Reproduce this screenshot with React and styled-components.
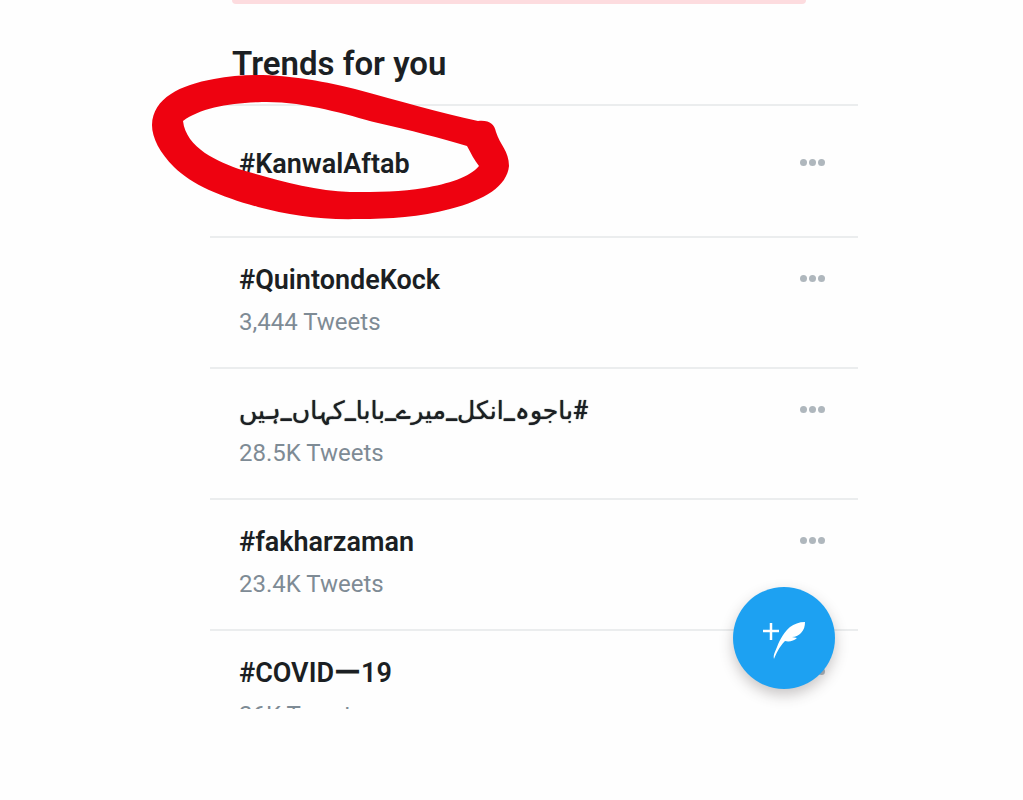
import React from "react";
import styled, { createGlobalStyle, css } from "styled-components";

const GlobalStyle = createGlobalStyle`
  * { box-sizing: border-box; }
  body {
    margin: 0;
    background: #fefefe;
    color: #1b1f23;
    font-family: Roboto, "DejaVu Sans", sans-serif;
  }
`;

const Page = styled.main`
  position: relative;
  padding: 0 165px 0 210px;
`;

const Panel = styled.section`
  position: relative;
  height: 709px;
  overflow: hidden;
`;

const Banner = styled.div`
  height: 4px;
  margin: 0 52px 0 22px;
  border-radius: 0 0 8px 8px;
  background: #fddcdf;
`;

const Heading = styled.h1`
  margin: 0;
  padding: 40px 0 20px 22px;
  font-size: 33px;
  line-height: 40px;
  font-weight: 600;
`;

const List = styled.ul`
  margin: 0;
  padding: 0;
  list-style: none;
`;

const Row = styled.li`
  display: flex;
  justify-content: space-between;
  align-items: flex-start;
  height: ${(p) => (p.$single ? "132px" : "131px")};
  padding: ${(p) => (p.$single ? "42px" : "26px")} 33px 0 29px;
  border-top: 2px solid #ebedee;
`;

const Name = styled.a`
  display: block;
  width: fit-content;
  color: inherit;
  text-decoration: none;
  font-size: 27px;
  line-height: 32px;
  font-weight: 600;
  white-space: nowrap;
  ${(p) =>
    p.$urdu &&
    css`
      font-weight: 500;
      font-size: 25px;
      text-shadow: 0 0 1px currentColor;
    `}
`;

const Count = styled.p`
  margin: 10px 0 0;
  color: #7e8b95;
  font-size: 24px;
  line-height: 32px;
`;

const MoreButton = styled.button`
  display: flex;
  gap: 2px;
  padding: 11px 0;
  border: 0;
  background: none;
  cursor: pointer;
`;

const Dot = styled.span`
  width: 7px;
  height: 7px;
  border-radius: 50%;
  background: #afb7bd;
`;

const ComposeButton = styled.button`
  position: absolute;
  right: 188px;
  bottom: 20px;
  width: 102px;
  height: 102px;
  padding: 0;
  border: 0;
  border-radius: 50%;
  background: #1da1f2;
  box-shadow: 0 6px 14px rgba(60, 50, 50, 0.28);
  cursor: pointer;
  svg { display: block; }
`;

const Scribble = styled.svg`
  position: absolute;
  left: 150px;
  top: 70px;
  pointer-events: none;
`;

const trends = [
  { name: "#KanwalAftab" },
  { name: "#QuintondeKock", count: "3,444 Tweets" },
  { name: "#باجوہ_انکل_میرے_بابا_کہاں_ہیں", count: "28.5K Tweets", urdu: true },
  { name: "#fakharzaman", count: "23.4K Tweets" },
  { name: "#COVIDー19", count: "26K Tweets" },
];

function Trend({ name, count, urdu }) {
  return (
    <Row $single={!count}>
      <div>
        <Name href="#" $urdu={urdu} dir={urdu ? "rtl" : "ltr"} lang={urdu ? "ur" : "en"}>
          {name}
        </Name>
        {count && <Count>{count}</Count>}
      </div>
      <MoreButton type="button" aria-label="More options">
        <Dot />
        <Dot />
        <Dot />
      </MoreButton>
    </Row>
  );
}

export default function App() {
  return (
    <>
      <GlobalStyle />
      <Page>
        <Panel>
          <Banner />
          <Heading>Trends for you</Heading>
          <List>
            {trends.map((t) => (
              <Trend key={t.name} {...t} />
            ))}
          </List>
        </Panel>
        <ComposeButton type="button" aria-label="Compose">
          <svg width="102" height="102" viewBox="0 0 102 102">
            <path d="M38 36v17M30 44h16" stroke="#fff" strokeWidth="2.500" fill="none" />
            <path
              d="M72 35C66 35 61 37 57 40C52 44 47 52 44 60C42 65 40 68 41 72C43 67 46 60 52 54C56 55 61 54 64 51L59 50C63 50 66 48 68 46C71 43 72 39 72 35Z"
              fill="#fff"
            />
          </svg>
        </ComposeButton>
        <Scribble width="362" height="152" viewBox="150 70 362 152" aria-hidden="true">
          <path
            fillRule="evenodd"
            fill="#ee0210"
            d="M152 125C153 98 180 85 214 79C262 69 318 80 355 89C400 101 440 113 478 121C490 120 494 124 496 132C500 145 509 151 509 166C507 186 485 200 450 209C420 217 390 219 358 219C320 220 288 215 258 207C222 197 192 185 174 167C160 153 152 138 152 125Z
               M183 121C200 108 230 103 262 102C304 101 344 114 378 123C410 130 440 138 467 146C471 153 474 160 479 166C470 177 448 184 424 188C402 192 378 192 350 192C314 191 276 180 242 170C218 162 186 148 183 121Z"
          />
        </Scribble>
      </Page>
    </>
  );
}
